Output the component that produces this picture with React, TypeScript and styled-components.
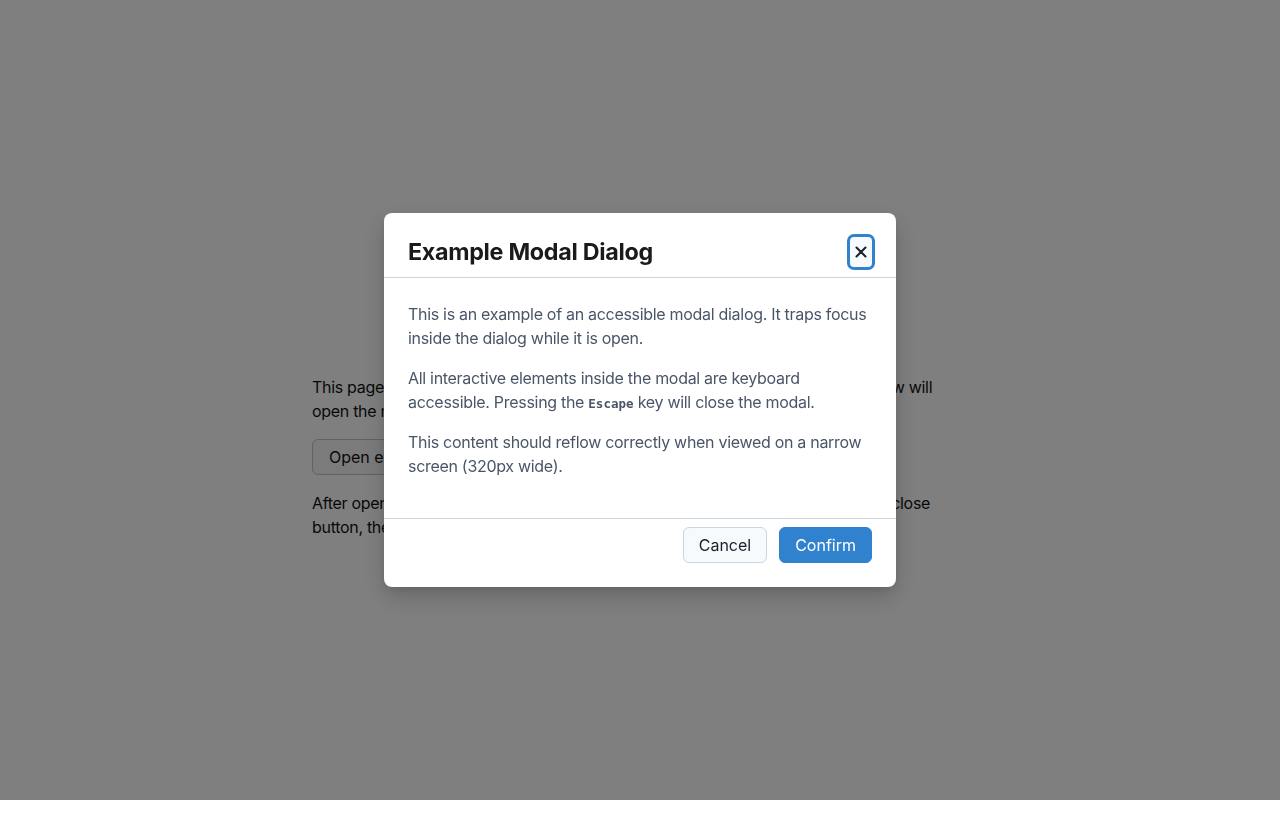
import React from "react";
import styled, { createGlobalStyle } from "styled-components";

const GlobalStyle = createGlobalStyle`
  html, body { margin: 0; padding: 0; background: #ffffff; }
  body {
    font-family: Inter, "Noto Sans", "Liberation Sans", sans-serif;
    color: #111111;
    letter-spacing: -0.3px;
    -webkit-font-smoothing: antialiased;
  }
  * { box-sizing: border-box; }
`;

const Page = styled.main`
  min-height: 800px;
  display: flex;
  flex-direction: column;
  justify-content: center;
  align-items: center;
  padding: 0 16px;
`;

const Content = styled.div`
  width: 100%;
  max-width: 656px;
`;

const PageHeader = styled.header`
  display: flex;
  flex-direction: column;
  align-items: center;
  gap: 8px;
  margin-bottom: 42px;
`;

const PageTitle = styled.h1`
  margin: 0;
  font-size: 32px;
  line-height: 40px;
  font-weight: 700;
`;

const Subtitle = styled.p`
  margin: 0;
  font-size: 16px;
  line-height: 24px;
`;

const PageText = styled.p`
  margin: 0 0 16px;
  font-size: 16px;
  line-height: 24px;
  &:last-child { margin-bottom: 0; }
`;

const OpenButton = styled.button`
  height: 36px;
  padding: 0 16px;
  margin-bottom: 16px;
  font: inherit;
  font-size: 16px;
  color: #111111;
  background: #f7f7f7;
  border: 1px solid #c4c4c4;
  border-radius: 6px;
`;

const Overlay = styled.div`
  position: fixed;
  top: 0;
  left: 0;
  right: 0;
  height: 800px;
  background: rgba(0, 0, 0, 0.5);
  display: flex;
  align-items: center;
  justify-content: center;
`;

const Dialog = styled.div`
  width: 512px;
  background: #ffffff;
  border-radius: 8px;
  box-shadow: 0 10px 25px rgba(0, 0, 0, 0.18), 0 4px 8px rgba(0, 0, 0, 0.08);
  display: flex;
  flex-direction: column;
`;

const Header = styled.div`
  display: flex;
  align-items: center;
  justify-content: space-between;
  padding: 21px 21px 7px 24px;
  border-bottom: 1px solid #cbd5e0;
`;

const Title = styled.h2`
  margin: 0;
  font-size: 23.3px;
  line-height: 28px;
  font-weight: 700;
  color: #1a1a1a;
  letter-spacing: -0.3px;
`;

const CloseButton = styled.button`
  width: 28px;
  height: 36px;
  padding: 0;
  display: flex;
  align-items: center;
  justify-content: center;
  background: #f7fafc;
  border: 3px solid #3182ce;
  border-radius: 7px;
  color: #1a202c;
`;

const Body = styled.div`
  padding: 24px;
`;

const BodyText = styled.p`
  margin: 0 0 16px;
  font-size: 16px;
  line-height: 24px;
  color: #4a5568;
`;

const Kbd = styled.code`
  font-family: "DejaVu Sans Mono", "Liberation Mono", monospace;
  font-size: 12.5px;
  line-height: 0;
  font-weight: 600;
  letter-spacing: 0;
  color: #4a5568;
`;

const Footer = styled.div`
  display: flex;
  justify-content: flex-end;
  gap: 12px;
  padding: 8px 24px 24px;
  border-top: 1px solid #cbd5e0;
`;

const ActionButton = styled.button<{ $primary?: boolean }>`
  height: 36px;
  padding: 0 15px;
  font: inherit;
  font-size: 16px;
  border-radius: 6px;
  border: 1px solid ${(p) => (p.$primary ? "#3182ce" : "#cbd5e0")};
  background: ${(p) => (p.$primary ? "#3182ce" : "#f7fafc")};
  color: ${(p) => (p.$primary ? "#ffffff" : "#1a202c")};
`;

export default function App() {
  return (
    <>
      <GlobalStyle />
      <Page>
        <Content>
          <PageHeader>
            <PageTitle>Accessible Modal Demo</PageTitle>
            <Subtitle>Keyboard and screen reader friendly</Subtitle>
          </PageHeader>
          <PageText>
            This page demonstrates an accessible modal dialog. Clicking on the button below will
            open the modal.
          </PageText>
          <OpenButton>Open example modal</OpenButton>
          <PageText>
            After opening the modal, press Tab to move focus between the buttons and the close
            button, then press Escape to dismiss it.
          </PageText>
        </Content>
      </Page>
      <Overlay>
        <Dialog role="dialog" aria-modal="true" aria-labelledby="modal-title">
          <Header>
            <Title id="modal-title">Example Modal Dialog</Title>
            <CloseButton aria-label="Close">
              <svg width="12" height="12" viewBox="0 0 12 12" aria-hidden="true">
                <path d="M1.5 1.5 L10.5 10.5 M10.5 1.5 L1.5 10.5" stroke="#1a202c" strokeWidth="2" strokeLinecap="round" />
              </svg>
            </CloseButton>
          </Header>
          <Body>
            <BodyText>
              This is an example of an accessible modal dialog. It traps focus inside the
              dialog while it is open.
            </BodyText>
            <BodyText>
              All interactive elements inside the modal are keyboard accessible. Pressing
              the <Kbd>Escape</Kbd> key will close the modal.
            </BodyText>
            <BodyText>
              This content should reflow correctly when viewed on a narrow screen (320px
              wide).
            </BodyText>
          </Body>
          <Footer>
            <ActionButton>Cancel</ActionButton>
            <ActionButton $primary>Confirm</ActionButton>
          </Footer>
        </Dialog>
      </Overlay>
    </>
  );
}
